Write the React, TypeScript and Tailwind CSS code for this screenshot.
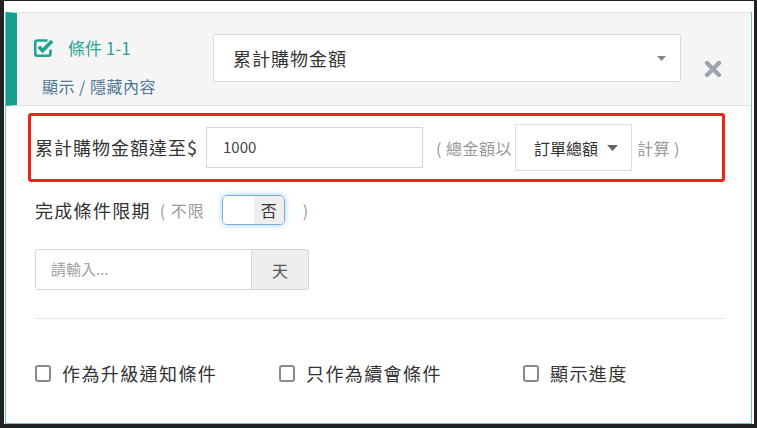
import React from "react";

const font = { fontFamily: '"Noto Sans CJK TC", "Noto Sans", sans-serif' };

function CheckSquare() {
  return (
    <svg width="22" height="20" viewBox="0 0 22 20" fill="none">
      <path d="M14.5 2.5H4.8A2.6 2.6 0 0 0 2.2 5.1v10.1a2.6 2.6 0 0 0 2.6 2.6h10.1a2.6 2.6 0 0 0 2.6-2.6V11.5" stroke="#1fa393" strokeWidth="2.6" fill="none" />
      <path d="M5.8 8.8l3.8 3.8 9.6-9.6" stroke="#1fa393" strokeWidth="3.6" fill="none" strokeLinejoin="miter" />
    </svg>
  );
}

function Times() {
  return (
    <svg width="18" height="18" viewBox="0 0 18 18">
      <path d="M3 3L15 15M15 3L3 15" stroke="#9ea3b0" strokeWidth="4.4" strokeLinecap="round" />
    </svg>
  );
}

function Caret({ w = 10, h = 6, color = "#777" }: { w?: number; h?: number; color?: string }) {
  return (
    <svg width={w} height={h} viewBox={`0 0 ${w} ${h}`}>
      <path d={`M0 0H${w}L${w / 2} ${h}Z`} fill={color} />
    </svg>
  );
}

function Box({ label, last }: { label: string; last?: boolean }) {
  return (
    <div className={last ? "flex items-center gap-[11px]" : "flex items-center gap-[11px] w-[244px] shrink-0"}>
      <span className="w-[16px] h-[17px] border-2 border-[#8a8a8a] rounded-[3px] bg-white" />
      <span className="text-[18px] text-[#333] tracking-[1.4px]">{label}</span>
    </div>
  );
}

export default function App() {
  return (
    <div className="w-[757px] h-[428px] bg-[#222] pl-[4px] pr-[3px] pb-[4px] pt-[1px] flex overflow-hidden" style={font}>
      <div className="flex-1 min-w-0 bg-white pt-[11px] pl-[1px] pr-[2px] flex flex-col">
        <div className="flex-1 min-w-0 border border-t-0 border-[#6ec6bd] flex flex-col">
          {/* header */}
          <div className="h-[94px] bg-[#f5f5f5] border-l-[11px] border-l-[#16a08f] border-t border-t-[#e6e6e6] border-b border-b-[#e2e2e2] flex items-start pl-[16px]">
            <div className="w-[180px] flex flex-col pt-[24px]">
              <div className="flex items-center gap-[13px] h-[22px]">
                <CheckSquare />
                <span className="text-[17px] text-[#2aa597]">條件 1-1</span>
              </div>
              <span className="mt-[15px] ml-[9px] text-[16px] text-[#4f7698] tracking-[0.5px]">顯示 / 隱藏內容</span>
            </div>
            <div className="mt-[21px] w-[468px] h-[48px] bg-white border border-[#dcdcdc] rounded-[2px] flex items-center justify-between pl-[19px] pr-[14px]">
              <span className="text-[18px] text-[#333] tracking-[1px]">累計購物金額</span>
              <Caret w={9} h={5} color="#888" />
            </div>
            <div className="ml-[23px] mt-[47px]">
              <Times />
            </div>
          </div>
          {/* content */}
          <div className="flex flex-col pl-[29px] pr-[26px] pt-[7px]">
            <div className="-ml-[7px] h-[69px] border-[3px] border-[#e8261c] rounded-[3px] flex items-center pl-[4px]">
              <span className="text-[18px] text-[#333] tracking-[1px]">累計購物金額達至$</span>
              <div className="ml-[8px] w-[217px] h-[41px] border border-[#d6d6d6] flex items-center pl-[16px] text-[15px] text-[#444]">1000</div>
              <span className="ml-[13px] text-[16px] text-[#999] tracking-[0.5px]">(&nbsp;總金額以</span>
              <div className="ml-[3px] w-[117px] h-[47px] border border-[#dcdcdc] bg-white flex items-center pl-[18px] gap-[9px]">
                <span className="text-[16px] text-[#333]">訂單總額</span>
                <Caret w={11} h={6} color="#666" />
              </div>
              <span className="ml-[5px] text-[16px] text-[#999] tracking-[0.5px]">計算&nbsp;)</span>
            </div>
            <div className="mt-[13px] h-[30px] flex items-center">
              <span className="text-[18px] text-[#333] tracking-[1.3px]">完成條件限期</span>
              <span className="ml-[9px] text-[16px] text-[#999] tracking-[1px]">(&nbsp;不限</span>
              <div className="ml-[17px] w-[63px] h-[30px] rounded-[5px] border border-[#74ace0] shadow-[0_0_6px_rgba(102,175,233,0.6)] flex overflow-hidden">
                <div className="w-[31px] bg-white" />
                <div className="flex-1 bg-[#eeeeee] flex items-center justify-center text-[16px] text-[#333]">否</div>
              </div>
              <span className="ml-[18px] text-[16px] text-[#999]">)</span>
            </div>
            <div className="mt-[24px] flex w-[274px] h-[41px]">
              <div className="w-[217px] border border-[#d6d6d6] rounded-l-[3px] flex items-center pl-[15px] text-[15px] text-[#a0a0a0]">請輸入...</div>
              <div className="flex-1 border border-l-0 border-[#d6d6d6] bg-[#eeeeee] rounded-r-[3px] flex items-center justify-center text-[16px] text-[#555]">天</div>
            </div>
            <div className="mt-[28px] h-px bg-[#eaeaea]" />
            <div className="mt-[39px] flex items-center h-[30px]">
              <Box label="作為升級通知條件" />
              <Box label="只作為續會條件" />
              <Box label="顯示進度" last />
            </div>
          </div>
        </div>
      </div>
    </div>
  );
}
